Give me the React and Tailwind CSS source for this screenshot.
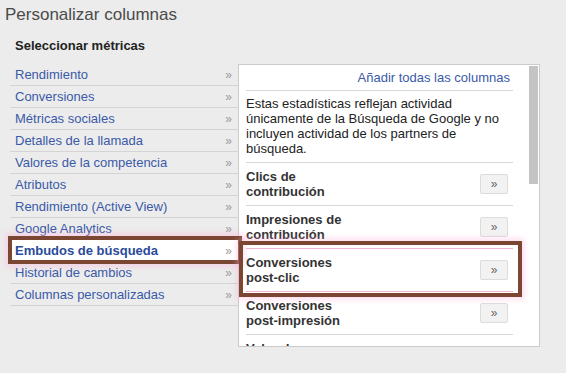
import React from "react";

const leftItems = [
  "Rendimiento",
  "Conversiones",
  "Métricas sociales",
  "Detalles de la llamada",
  "Valores de la competencia",
  "Atributos",
  "Rendimiento (Active View)",
  "Google Analytics",
  "Embudos de búsqueda",
  "Historial de cambios",
  "Columnas personalizadas",
];

const metrics = [
  ["Clics de", "contribución"],
  ["Impresiones de", "contribución"],
  ["Conversiones", "post-clic"],
  ["Conversiones", "post-impresión"],
];

export default function App() {
  return (
    <div
      className="relative w-[566px] h-[373px] overflow-hidden bg-[#ececec] text-[#222]"
      style={{ fontFamily: '"Liberation Sans", Arial, sans-serif' }}
    >
      <div className="pl-[5px] pt-[5px] text-[17px] leading-[20px] text-[#4a4a4a]">
        Personalizar columnas
      </div>
      <div className="pl-[15px] mt-[13px] text-[13px] leading-[16px] font-bold text-[#222]">
        Seleccionar métricas
      </div>
      <div className="flex pl-[10px] mt-[10px]">
        <div className="w-[228px]">
          {leftItems.map((it, i) => {
            const sel = i === 8;
            return (
              <div
                key={it}
                className={
                  "h-[22px] flex items-center justify-between border-b border-[#d4d4d4] pl-[5px] pr-[6px] text-[13px] " +
                  (sel ? "bg-white font-bold text-[#2a4b9b]" : "text-[#3a5aa8]")
                }
              >
                <span>{it}</span>
                <span className="text-[#9a9a9a] font-normal text-[12px]">»</span>
              </div>
            );
          })}
        </div>
        <div className="flex w-[302px] h-[283px] bg-white border border-[#cbcbcb] overflow-hidden">
          <div className="w-[275px] pl-[7px] shrink-0">
            <div className="w-[267px]">
              <div className="h-[26px] flex items-center justify-end pr-[3px] border-b border-[#d8d8d8] text-[13px] text-[#3a5aa8]">
                Añadir todas las columnas
              </div>
              <div className="pt-[5px] pb-[6px] text-[13px] leading-[15px] text-[#222] border-b border-[#d8d8d8]">
                Estas estadísticas reflejan actividad únicamente de la Búsqueda de Google y no incluyen actividad de los partners de búsqueda.
              </div>
              {metrics.map(([a, b], i) => (
                <div
                  key={i}
                  className={
                    "h-[43px] flex items-center justify-between border-b " +
                    (i === 2 ? "border-[#f3b3d3]" : "border-[#d8d8d8]") +
                    (i === 1 ? " border-b-[#f3b3d3]" : "")
                  }
                >
                  <div className="w-[140px] text-[13px] leading-[15px] font-bold text-[#333]">
                    {a}
                    <br />
                    {b}
                  </div>
                  <div className="mr-[5px] w-[28px] h-[20px] flex items-center justify-center bg-[#f2f2f2] border border-[#dcdcdc] rounded-[2px] text-[12px] text-[#666]">
                    »
                  </div>
                </div>
              ))}
              <div className="pt-[6px] text-[13px] leading-[15px] font-bold text-[#333]">
                Valor de
              </div>
            </div>
          </div>
          <div className="ml-[15px] mt-[1px] w-[9px] h-[118px] bg-[#c4c4c4]" />
        </div>
      </div>

      <div className="absolute left-[8px] top-[236px] w-[234px] h-[28px] border-[4px] border-[#7b4632] shadow-[0_0_6px_2px_rgba(255,170,215,0.45)] pointer-events-none" />
      <div className="absolute left-[239px] top-[241px] w-[283px] h-[56px] border-[4px] border-[#7b4632] shadow-[0_0_6px_2px_rgba(255,170,215,0.45)] pointer-events-none" />
    </div>
  );
}
